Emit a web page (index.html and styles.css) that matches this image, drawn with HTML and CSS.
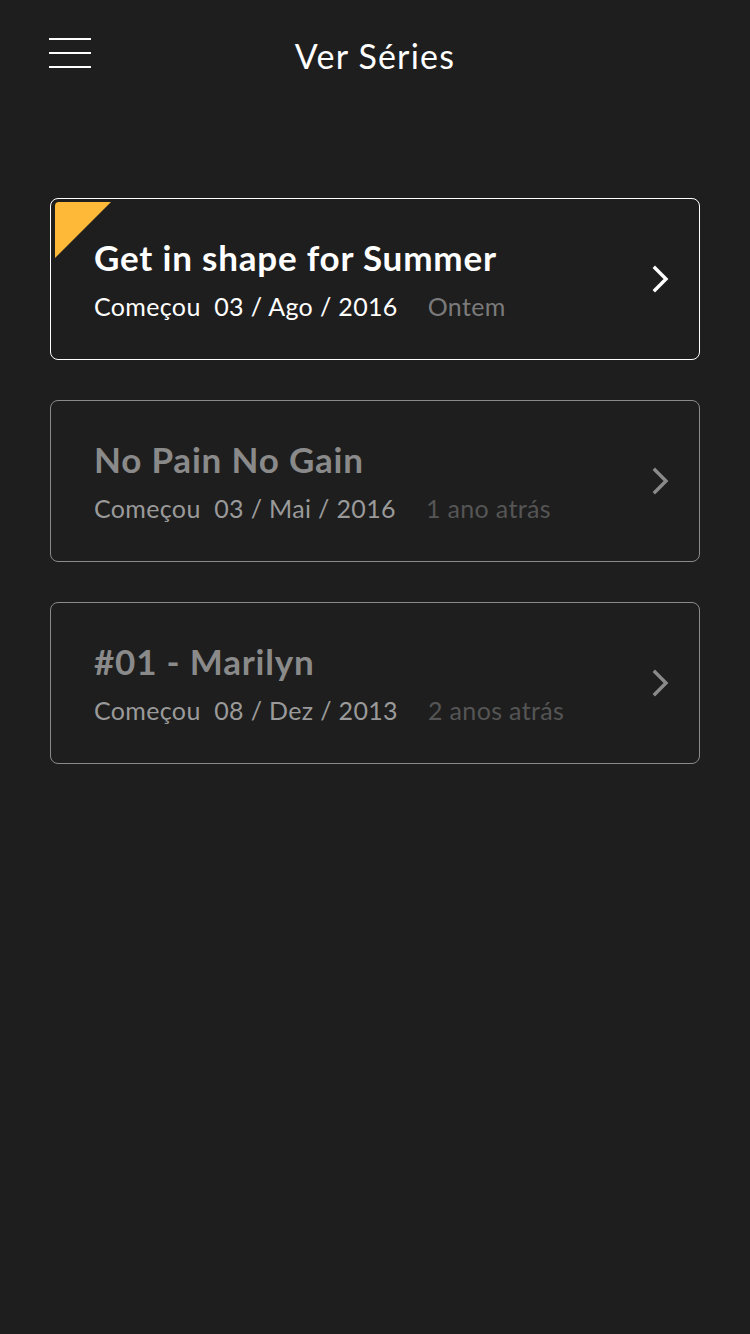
FILE: index.html
```html
<!DOCTYPE html>
<html lang="pt">
<head>
<meta charset="utf-8">
<title>Ver Séries</title>
<link rel="stylesheet" href="styles.css">
</head>
<body>
<div class="app">
  <header class="topbar">
    <button class="menu" aria-label="Menu">
      <span></span><span></span><span></span>
    </button>
    <h1 class="title">Ver Séries</h1>
  </header>
  <main class="list">
    <a class="card active">
      <span class="flag"></span>
      <div class="info">
        <div class="name">Get in shape for Summer</div>
        <div class="meta"><span class="started">Começou&nbsp; 03 / Ago / 2016</span><span class="ago">Ontem</span></div>
      </div>
      <svg class="chev" width="20" height="28" viewBox="0 0 20 28"><path d="M4 3 L15 14 L4 25" fill="none" stroke="currentColor" stroke-width="3.4" stroke-linecap="square"/></svg>
    </a>
    <a class="card">
      <div class="info">
        <div class="name">No Pain No Gain</div>
        <div class="meta"><span class="started">Começou&nbsp; 03 / Mai / 2016</span><span class="ago">1 ano atrás</span></div>
      </div>
      <svg class="chev" width="20" height="28" viewBox="0 0 20 28"><path d="M4 3 L15 14 L4 25" fill="none" stroke="currentColor" stroke-width="3.4" stroke-linecap="square"/></svg>
    </a>
    <a class="card">
      <div class="info">
        <div class="name">#01 - Marilyn</div>
        <div class="meta"><span class="started">Começou&nbsp; 08 / Dez / 2013</span><span class="ago">2 anos atrás</span></div>
      </div>
      <svg class="chev" width="20" height="28" viewBox="0 0 20 28"><path d="M4 3 L15 14 L4 25" fill="none" stroke="currentColor" stroke-width="3.4" stroke-linecap="square"/></svg>
    </a>
  </main>
</div>
</body>
</html>
```
FILE: styles.css
```css
* { box-sizing: border-box; }
html, body { margin: 0; padding: 0; background: #1e1e1e; }
body { font-family: Lato, "Open Sans", sans-serif; color: #fff; width: 750px; height: 1334px; }
.app { width: 750px; height: 1334px; }
.topbar {
  position: relative;
  height: 110px;
  display: flex;
  align-items: center;
  justify-content: center;
}
.menu {
  position: absolute;
  left: 49px;
  top: 38px;
  width: 42px;
  height: 30px;
  padding: 0;
  margin: 0;
  border: 0;
  background: none;
  display: flex;
  flex-direction: column;
  justify-content: space-between;
}
.menu span { display: block; height: 2px; width: 42px; background: #fff; }
.title {
  margin: 0;
  font-weight: 400;
  font-size: 34px;
  color: #fff;
  letter-spacing: 1.2px;
}
.list {
  padding: 88px 50px 0 50px;
  display: flex;
  flex-direction: column;
  gap: 40px;
}
.card {
  position: relative;
  height: 162px;
  border: 1px solid #8a8a8a;
  border-radius: 8px;
  display: flex;
  align-items: center;
  padding: 0 28px 0 43px;
  color: #888;
}
.card.active { border-color: #fff; color: #fff; }
.flag {
  position: absolute;
  left: 4px;
  top: 3px;
  width: 56px;
  height: 56px;
  background: #fdb937;
  clip-path: polygon(0 0, 100% 0, 0 100%);
  border-top-left-radius: 4px;
}
.info { flex: 1; }
.name {
  font-size: 35px;
  font-weight: 700;
  line-height: 40px;
  color: #8a8a8a;
  letter-spacing: 0.8px;
}
.meta {
  margin-top: 14px;
  font-size: 25px;
  line-height: 30px;
  display: flex;
  gap: 30px;
  letter-spacing: 0.35px;
}
.started { color: #9a9a9a; }
.ago { color: #555; }
.active .name { color: #fff; }
.active .started { color: #fff; }
.active .ago { color: #7a7a7a; }
.chev { color: #8a8a8a; flex: none; }
.active .chev { color: #fff; }
```
